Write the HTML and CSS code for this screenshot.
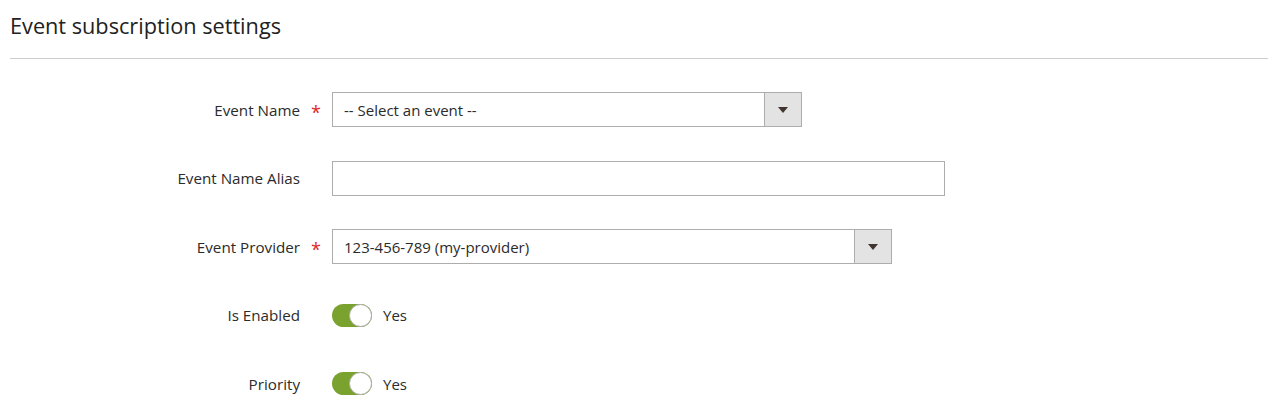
FILE: index.html
```html
<!DOCTYPE html>
<html>
<head>
<meta charset="utf-8">
<link rel="stylesheet" href="styles.css">
</head>
<body>
<div class="page">
  <h2 class="title">Event subscription settings</h2>
  <form class="form">
    <div class="row">
      <label class="label">Event Name</label>
      <span class="req">*</span>
      <div class="select w470">
        <span class="select-text">-- Select an event --</span>
        <span class="select-btn"><span class="arrow"></span></span>
      </div>
    </div>
    <div class="row">
      <label class="label">Event Name Alias</label>
      <span class="req"></span>
      <div class="input w613"></div>
    </div>
    <div class="row">
      <label class="label">Event Provider</label>
      <span class="req">*</span>
      <div class="select w560">
        <span class="select-text">123-456-789 (my-provider)</span>
        <span class="select-btn"><span class="arrow"></span></span>
      </div>
    </div>
    <div class="row">
      <label class="label">Is Enabled</label>
      <span class="req"></span>
      <div class="toggle-wrap">
        <span class="toggle"><span class="knob"></span></span>
        <span class="toggle-text">Yes</span>
      </div>
    </div>
    <div class="row">
      <label class="label">Priority</label>
      <span class="req"></span>
      <div class="toggle-wrap">
        <span class="toggle"><span class="knob"></span></span>
        <span class="toggle-text">Yes</span>
      </div>
    </div>
  </form>
</div>
</body>
</html>
```
FILE: styles.css
```css
* { box-sizing: border-box; }
html, body { margin: 0; padding: 0; background: #fff; }
body {
  font-family: "Open Sans", "Liberation Sans", sans-serif;
  color: #303030;
  font-size: 15px;
}
.page { padding: 0 12px 0 10px; }
.title {
  margin: 0;
  font-weight: 400;
  font-size: 21.7px;
  line-height: 30px;
  padding-top: 11px;
  padding-bottom: 17px;
  border-bottom: 1px solid #cccccc;
  color: #222222;
}
.form {
  padding-top: 33px;
  display: flex;
  flex-direction: column;
  gap: 33.5px;
}
.row {
  display: grid;
  grid-template-columns: 290px 32px auto;
  align-items: center;
  height: 35px;
}
.label {
  text-align: right;
  font-size: 15.2px;
  color: #2b2b2b;
}
.req {
  color: #e22626;
  text-align: center;
  font-size: 18px;
  line-height: 1;
  padding-top: 4px;
}
.select, .input {
  height: 35px;
  border: 1px solid #adadad;
  background: #fff;
  display: flex;
  align-items: stretch;
}
.w470 { width: 470px; }
.w560 { width: 560px; }
.w613 { width: 613px; }
.select-text {
  flex: 1;
  padding-left: 11px;
  display: flex;
  align-items: center;
  font-size: 15px;
  color: #2b2b2b;
}
.select-btn {
  width: 37px;
  background: #e3e3e3;
  border-left: 1px solid #adadad;
  display: flex;
  align-items: center;
  justify-content: center;
}
.arrow {
  width: 0;
  height: 0;
  border-left: 5px solid transparent;
  border-right: 5px solid transparent;
  border-top: 6px solid #41362f;
  margin-top: 1px;
}
.toggle-wrap {
  display: flex;
  align-items: center;
  gap: 11px;
}
.toggle {
  width: 40px;
  height: 23px;
  border-radius: 12px;
  background: #79a22e;
  position: relative;
  display: block;
}
.knob {
  position: absolute;
  right: 0;
  top: 0;
  width: 23px;
  height: 23px;
  border-radius: 50%;
  background: #fff;
  border: 1px solid #adadad;
}
.toggle-text {
  font-size: 15px;
  color: #2b2b2b;
}
```
